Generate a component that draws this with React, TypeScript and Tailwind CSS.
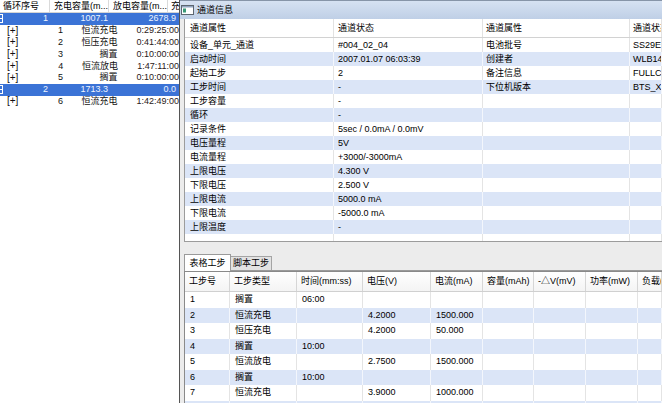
import React from "react";

const cycles = [
  {
    no: "1",
    charge: "1007.1",
    discharge: "2678.9",
    steps: [
      ["1", "恒流充电", "0:29:25:00"],
      ["2", "恒压充电", "0:41:44:00"],
      ["3", "搁置", "0:10:00:00"],
      ["4", "恒流放电", "1:47:11:00"],
      ["5", "搁置", "0:10:00:00"],
    ],
  },
  {
    no: "2",
    charge: "1713.3",
    discharge: "0.0",
    steps: [["6", "恒流充电", "1:42:49:00"]],
  },
];

const infoRows = [
  ["设备_单元_通道", "#004_02_04", "电池批号", "SS29E"],
  ["启动时间", "2007.01.07 06:03:39", "创建者", "WLB1410"],
  ["起始工步", "2", "备注信息", "FULLCC"],
  ["工步时间", "-", "下位机版本", "BTS_XW"],
  ["工步容量", "-", "", ""],
  ["循环", "-", "", ""],
  ["记录条件", "5sec / 0.0mA / 0.0mV", "", ""],
  ["电压量程", "5V", "", ""],
  ["电流量程", "+3000/-3000mA", "", ""],
  ["上限电压", "4.300 V", "", ""],
  ["下限电压", "2.500 V", "", ""],
  ["上限电流", "5000.0 mA", "", ""],
  ["下限电流", "-5000.0 mA", "", ""],
  ["上限温度", "-", "", ""],
];

const stepCols = [
  { label: "工步号", w: "w-[45px]" },
  { label: "工步类型", w: "w-[67px]" },
  { label: "时间(mm:ss)", w: "w-[66px]" },
  { label: "电压(V)", w: "w-[68px]" },
  { label: "电流(mA)", w: "w-[52px]" },
  { label: "容量(mAh)", w: "w-[51px]" },
  { label: "-△V(mV)", w: "w-[52px]" },
  { label: "功率(mW)", w: "w-[52px]" },
  { label: "负载(mA)", w: "flex-1" },
];

const steps = [
  ["1", "搁置", "06:00", "", ""],
  ["2", "恒流充电", "", "4.2000", "1500.000"],
  ["3", "恒压充电", "", "4.2000", "50.000"],
  ["4", "搁置", "10:00", "", ""],
  ["5", "恒流放电", "", "2.7500", "1500.000"],
  ["6", "搁置", "10:00", "", ""],
  ["7", "恒流充电", "", "3.9000", "1000.000"],
  ["8", "", "", "", ""],
];

function CycleTree() {
  return (
    <div className="w-[180px] shrink-0 border-r border-[#555] bg-white flex flex-col overflow-hidden">
      <div className="h-[13px] shrink-0 flex items-center border-b border-[#d4d4d4] whitespace-nowrap">
        <div className="w-[50px] h-full flex items-center pl-[3px] border-r border-[#dadada]">循环序号</div>
        <div className="w-[59px] h-full flex items-center pl-[4px] border-r border-[#dadada] overflow-hidden">充电容量(m...</div>
        <div className="w-[59px] h-full flex items-center pl-[4px] border-r border-[#dadada] overflow-hidden">放电容量(m...</div>
        <div className="flex-1 h-full flex items-center pl-[3px] overflow-hidden">充</div>
      </div>
      {cycles.map((c) => (
        <React.Fragment key={c.no}>
          <div className="h-[11.8px] shrink-0 flex items-center bg-[#3b73d6] text-[#eef3ff] whitespace-nowrap">
            <div className="w-[50px] flex items-center justify-between pr-[2px]">
              <span className="w-[3px] h-[9px] border-y border-r border-white flex items-center">
                <span className="w-[2px] h-px bg-white" />
              </span>
              <span>{c.no}</span>
            </div>
            <div className="w-[59px] text-right pr-[1px]">{c.charge}</div>
            <div className="w-[67px] text-right">{c.discharge}</div>
          </div>
          {c.steps.map((s) => (
            <div key={s[0]} className="h-[11.8px] shrink-0 flex items-center whitespace-nowrap text-[#111]">
              <div className="w-[60px] pl-[7px] text-[10px]">[+]</div>
              <div className="w-[10px]">{s[0]}</div>
              <div className="w-[52px] text-right">{s[1]}</div>
              <div className="ml-[19px] text-[#2a2018]">{s[2]}</div>
            </div>
          ))}
        </React.Fragment>
      ))}
    </div>
  );
}

function TitleIcon() {
  return (
    <svg width="13" height="10" viewBox="0 0 13 10" className="shrink-0">
      <rect x="0.5" y="0.5" width="12" height="9" fill="#fff" stroke="#5d6670" />
      <rect x="1" y="1" width="11" height="1.5" fill="#8fa4bf" />
      <rect x="2" y="3.5" width="3" height="4" fill="#3a9a78" />
    </svg>
  );
}

function InfoTable() {
  const cellW = ["w-[149px] pl-[5px]", "w-[149px] pl-[4px]", "w-[147px] pl-[3px]", "flex-1 pl-[3px]"];
  return (
    <div className="h-[223px] shrink-0 ml-[4px] bg-white border-l border-b border-[#9c9c9c] flex flex-col overflow-hidden whitespace-nowrap">
      <div className="h-[19px] shrink-0 flex border-b border-[#d2d2d2]">
        {["通道属性", "通道状态", "通道属性", "通道状态"].map((h, i) => (
          <div key={i} className={`${cellW[i]} h-full flex items-center border-r border-[#e2e2e2] overflow-hidden`}>
            {h}
          </div>
        ))}
      </div>
      {infoRows.map((r, ri) => (
        <div key={ri} className={`h-[14px] shrink-0 flex ${ri % 2 ? "bg-[#dbe5f7]" : "bg-white"}`}>
          {r.map((v, i) => (
            <div
              key={i}
              className={`${cellW[i]} h-full flex items-center border-r overflow-hidden ${ri % 2 ? "border-[#f3f6fc]" : "border-[#e4e4e4]"}`}
            >
              {v}
            </div>
          ))}
        </div>
      ))}
      <div className="flex-1 flex">
        {cellW.map((w, i) => (
          <div key={i} className={`${w} h-full border-r border-[#e4e4e4]`} />
        ))}
      </div>
    </div>
  );
}

function StepTable() {
  return (
    <div className="flex-1 ml-[4px] bg-white border-l border-t border-[#8a8a8a] flex flex-col overflow-hidden whitespace-nowrap">
      <div className="h-[20px] shrink-0 flex border-b border-[#d0d0d0] bg-gradient-to-b from-white to-[#f4f4f4]">
        {stepCols.map((c, i) => (
          <div key={i} className={`${c.w} h-full flex items-center pl-[4px] border-r border-[#d6d6d6] overflow-hidden`}>
            {c.label}
          </div>
        ))}
      </div>
      {steps.map((r, ri) => (
        <div key={ri} className={`h-[15.5px] shrink-0 flex ${ri % 2 ? "bg-[#dbe5f7]" : "bg-white"}`}>
          {stepCols.map((c, i) => (
            <div
              key={i}
              className={`${c.w} h-full flex items-center pl-[5px] border-r overflow-hidden ${ri % 2 ? "border-[#f3f6fc]" : "border-[#e4e4e4]"}`}
            >
              {r[i] ?? ""}
            </div>
          ))}
        </div>
      ))}
    </div>
  );
}

export default function App() {
  return (
    <div className="w-[662px] h-[403px] overflow-hidden flex bg-white text-black text-[9px] leading-none font-['Liberation_Sans','Noto_Sans_CJK_SC',sans-serif]">
      <CycleTree />
      <div className="flex-1 flex flex-col bg-[#ececec] overflow-hidden">
        <div className="h-[19px] shrink-0 flex items-center gap-[3px] pl-[1px] border-t border-[#8795a8] bg-gradient-to-b from-[#d6e2f2] to-[#bfcfe6]">
          <TitleIcon />
          <span>通道信息</span>
        </div>
        <InfoTable />
        <div className="h-[29px] shrink-0 flex items-end pt-[12px] pl-[4px]">
          <div className="h-[17px] w-[47px] bg-white border-t border-l border-r border-[#9a9a9a] flex items-center justify-center">
            表格工步
          </div>
          <div className="flex-1 h-[14px] flex items-end border-b border-[#9a9a9a]">
            <div className="h-[14px] w-[41px] bg-[#e2e2e2] border-t border-r border-[#a4a4a4] flex items-center justify-center">
              脚本工步
            </div>
          </div>
        </div>
        <StepTable />
      </div>
    </div>
  );
}
